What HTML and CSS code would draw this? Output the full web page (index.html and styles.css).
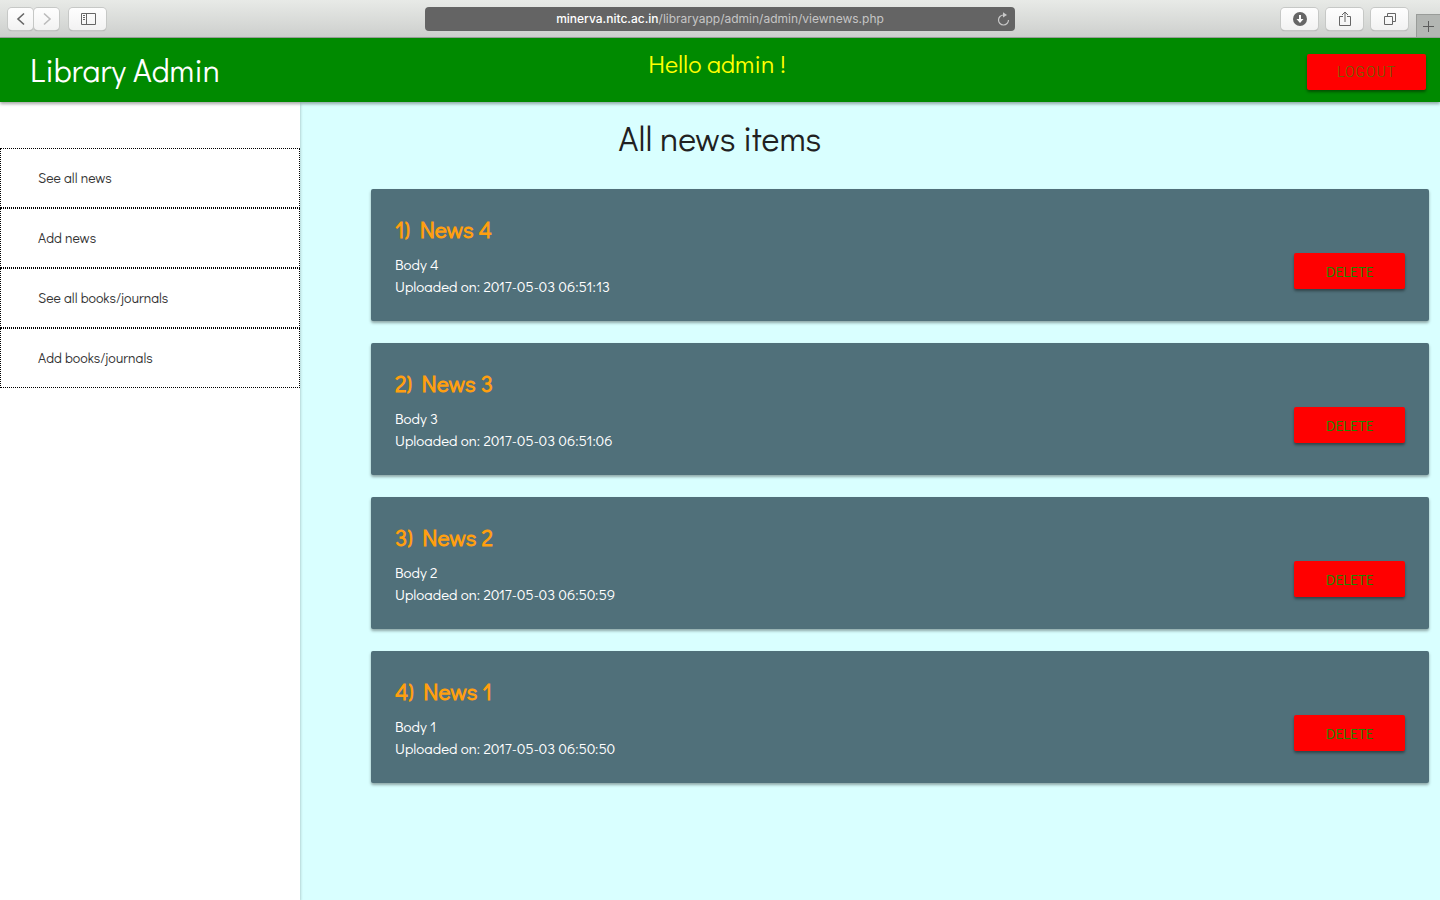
FILE: index.html
```html
<!DOCTYPE html>
<html lang="en">
<head>
<meta charset="utf-8">
<title>Library Admin</title>
<link rel="stylesheet" href="styles.css">
</head>
<body>
<div class="toolbar">
  <div class="tools">
    <div class="pair">
      <button class="tool nav-tool" aria-label="Back"><svg width="10" height="14" viewBox="0 0 10 14"><path d="M8 1.500 2 7l6 5.500" stroke="#666" stroke-width="1.600"/></svg></button>
      <button class="tool nav-tool" aria-label="Forward"><svg width="10" height="14" viewBox="0 0 10 14"><path d="M2 1.500 8 7l-6 5.500" stroke="#bbb" stroke-width="1.600"/></svg></button>
    </div>
    <button class="tool" aria-label="Show sidebar"><svg width="16" height="13" viewBox="0 0 16 13"><path d="M1.500 1.500h14v11h-14zM6.500 1.500v11M3 3.500h2M3 5.500h2M3 7.500h2" stroke="#666"/></svg></button>
  </div>
  <div class="address">
    <span class="url"><span class="host">minerva.nitc.ac.in</span>/libraryapp/admin/admin/viewnews.php</span>
    <button class="reload" aria-label="Reload"><svg width="13" height="14" viewBox="0 0 13 14"><path d="M7.500 3H6.500a5 5 0 1 0 5 5" stroke="#c8c8c8" stroke-width="1.200"/><path d="M6 .2 10 3 6 5.500z" fill="#c8c8c8"/></svg></button>
  </div>
  <div class="tools tools-right">
    <button class="tool" aria-label="Downloads"><svg width="14" height="14" viewBox="0 0 14 14"><circle cx="7" cy="7" r="7" fill="#666"/><path d="M6 3h2v4h2.500L7 11 3.500 7H6z" fill="#fff"/></svg></button>
    <button class="tool" aria-label="Share"><svg width="12" height="16" viewBox="0 0 12 16"><path d="M4 5.500H.5v9h11v-9H8M6 11V1M3 4l3-3 3 3" stroke="#666"/></svg></button>
    <button class="tool" aria-label="Show all tabs"><svg width="12" height="12" viewBox="0 0 12 12"><path d="M.5 3.500h8v8h-8zM3.500 3.500v-3h8v8h-3" stroke="#666"/></svg></button>
  </div>
  <button class="new-tab" aria-label="New tab"><svg width="11" height="11" viewBox="0 0 11 11"><path d="M5.500 0v11M0 5.500h11" stroke="#5b5b5b"/></svg></button>
</div>
<header class="banner">
  <div class="brand">Library Admin</div>
  <div class="greeting">Hello admin !</div>
  <button class="action logout">LOGOUT</button>
</header>
<div class="layout">
  <nav class="sidebar">
    <a href="#">See all news</a>
    <a href="#">Add news</a>
    <a href="#">See all books/journals</a>
    <a href="#">Add books/journals</a>
  </nav>
  <main class="content">
    <h1>All news items</h1>
    <div class="news">
      <article class="card"><div><h2>1) News 4</h2><p>Body 4</p><p>Uploaded on: 2017-05-03 06:51:13</p></div><button class="action delete">DELETE</button></article>
      <article class="card"><div><h2>2) News 3</h2><p>Body 3</p><p>Uploaded on: 2017-05-03 06:51:06</p></div><button class="action delete">DELETE</button></article>
      <article class="card"><div><h2>3) News 2</h2><p>Body 2</p><p>Uploaded on: 2017-05-03 06:50:59</p></div><button class="action delete">DELETE</button></article>
      <article class="card"><div><h2>4) News 1</h2><p>Body 1</p><p>Uploaded on: 2017-05-03 06:50:50</p></div><button class="action delete">DELETE</button></article>
    </div>
  </main>
</div>
</body>
</html>
```
FILE: styles.css
```css
* { box-sizing: border-box; }
body {
  margin: 0;
  min-height: 100vh;
  display: flex;
  flex-direction: column;
  font-family: "Didact Gothic", Lato, sans-serif;
  font-size: 14px;
  color: #212121;
}
button { font-family: inherit; border: 0; padding: 0; cursor: pointer; }
svg { display: block; fill: none; }
h1, h2, p { margin: 0; font-weight: 400; }

.toolbar {
  display: grid;
  grid-template-columns: 1fr 590px 1fr;
  align-items: center;
  position: relative;
  height: 38px;
  background: linear-gradient(#e8eae7, #cdcfcd);
  border-bottom: 1px solid #9c9f9c;
}
.tools { display: flex; gap: 10px; padding-left: 8px; }
.tools-right { gap: 8px; justify-content: flex-end; padding: 0 32px 0 0; }
.pair { display: flex; gap: 1px; }
.tool {
  display: flex;
  align-items: center;
  justify-content: center;
  width: 37px;
  height: 22px;
  border-radius: 4px;
  background: linear-gradient(#fefefe, #f2f2f2);
  box-shadow: 0 0 0 1px #c6c8c6, 0 1px 1px #9a9a9a;
}
.nav-tool { width: 25px; }
.address {
  display: grid;
  grid-template-columns: 24px 1fr 24px;
  align-items: center;
  height: 24px;
  border-radius: 4px;
  background: #646464;
  color: #c6c6c6;
  font: 12px/24px Inter, sans-serif;
}
.url { grid-column: 2; text-align: center; white-space: nowrap; }
.host { color: #fff; font-weight: 500; }
.reload { background: none; justify-self: center; }
.new-tab {
  position: absolute;
  right: 0;
  bottom: 0;
  display: flex;
  align-items: center;
  justify-content: center;
  width: 24px;
  height: 23px;
  background: #b3b6b3;
  border: 1px solid #999c99;
  border-width: 1px 0 0 1px;
}

.banner {
  display: grid;
  grid-template-columns: 1fr auto 1fr;
  height: 64px;
  padding: 0 14px 0 8px;
  background: #008a00;
  position: relative;
  z-index: 1;
  box-shadow: 0 2px 3px rgba(0, 0, 0, .35);
}
.brand { padding-left: 22px; color: #fff; font-size: 32px; line-height: 64px; }
.greeting { color: #ff0; font-size: 25px; line-height: 52px; }
.action {
  height: 36px;
  border-radius: 2px;
  padding: 0 30px;
  background: #f00;
  color: #1a8a00;
  font-size: 14px;
  line-height: 36px;
  box-shadow: 0 2px 3px rgba(0, 0, 0, .4);
}
.logout {
  justify-self: end;
  margin-top: 16px;
  color: #5c6c00;
  font-family: Roboto, sans-serif;
  font-weight: 300;
  letter-spacing: 1px;
}

.layout { display: grid; grid-template-columns: 300px 1fr; flex: 1; }
.sidebar {
  position: relative;
  padding-top: 46px;
  background: #fff;
  box-shadow: 0 2px 3px rgba(0, 0, 0, .3);
}
.sidebar a {
  display: block;
  height: 60px;
  padding-left: 37px;
  border: 1px dotted #000;
  line-height: 58px;
  color: #333;
  text-decoration: none;
}
.content { background: #d9ffff; padding: 16px 11px 22px 71px; }
h1 { padding-right: 360px; text-align: center; font-size: 34px; line-height: 40px; }
.news { display: flex; flex-direction: column; gap: 22px; margin-top: 31px; }
.card {
  display: flex;
  align-items: center;
  justify-content: space-between;
  padding: 24px;
  border-radius: 2px;
  background: #50707a;
  color: #fff;
  font-size: 15px;
  line-height: 22px;
  box-shadow: 0 2px 3px rgba(0, 0, 0, .35);
}
.delete { min-width: 111px; margin-top: 32px; padding: 0 24px; font-size: 15px; font-weight: 600; }
h2 { margin-bottom: 8px; color: #ff9f0f; font-size: 23px; line-height: 32px; font-weight: 700; }
```
